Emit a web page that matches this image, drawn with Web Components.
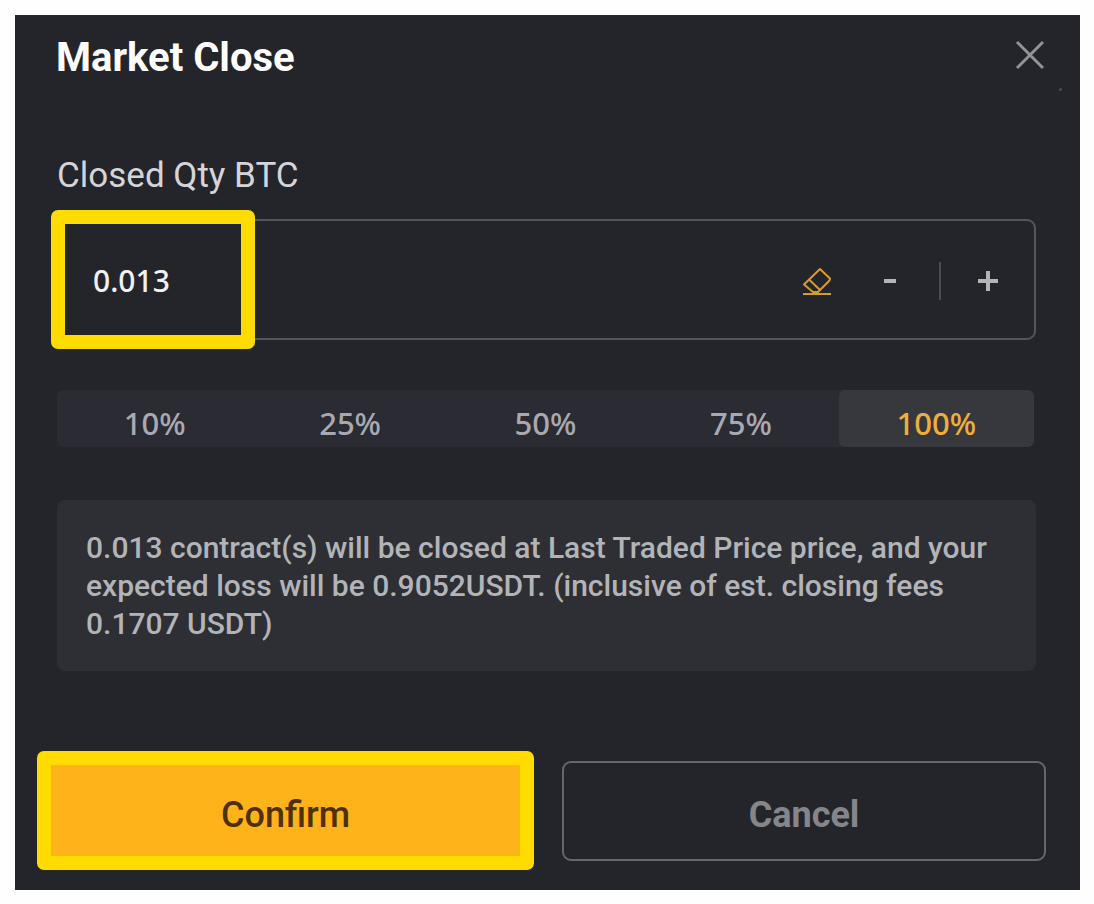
<!DOCTYPE html>
<html lang="en">
<head>
<meta charset="utf-8">
<meta name="viewport" content="width=device-width, initial-scale=1">
<title>Market Close</title>
<style>
  body {
    margin: 15px 14px 14px 15px;
    background: #fefefe;
    font-family: "Noto Sans", "Open Sans", sans-serif;
  }
</style>
</head>
<body>
<modal-dialog heading="Market Close">
  <quantity-field label="Closed Qty BTC" value="0.013" step="0.001"></quantity-field>
  <percent-picker values="10,25,50,75,100" selected="100"></percent-picker>
  <info-note>0.013 contract(s) will be closed at Last Traded Price price, and your expected loss will be 0.9052USDT. (inclusive of est. closing fees 0.1707 USDT)</info-note>
  <action-button slot="actions" variant="primary">Confirm</action-button>
  <action-button slot="actions">Cancel</action-button>
</modal-dialog>

<script>
class ModalDialog extends HTMLElement {
  constructor() {
    super();
    this.attachShadow({ mode: 'open' });
  }

  connectedCallback() {
    this.shadowRoot.innerHTML = `
      <style>
        :host {
          display: block;
          background: #24252a;
          color: #fff;
        }
        header {
          position: relative;
          display: flex;
          align-items: flex-start;
          justify-content: space-between;
          padding: 16px 34px 0 41px;
        }
        /* small speck under the close button */
        header::after {
          content: "";
          position: absolute;
          right: 18px;
          bottom: -6px;
          width: 3px;
          height: 3px;
          border-radius: 50%;
          background: #4c4d51;
        }
        h1 {
          margin: 0;
          font-family: Roboto, sans-serif;
          font-size: 40px;
          line-height: 54px;
          font-weight: 700;
        }
        .close {
          display: flex;
          margin-top: 8px;
          padding: 0;
          border: 0;
          background: none;
          color: #929397;
        }
        .content {
          padding: 67px 44px 0 42px;
        }
        footer {
          display: grid;
          grid-template-columns: 497fr 484fr;
          gap: 28px;
          align-items: center;
          padding: 80px 34px 20px 22px;
        }
      </style>
      <header>
        <h1>${this.getAttribute('heading')}</h1>
        <button class="close" type="button" aria-label="Close">
          <svg width="32" height="32" viewBox="0 0 32 32" fill="none" stroke="currentColor" stroke-width="3">
            <path d="M3 3L29 29M29 3L3 29"/>
          </svg>
        </button>
      </header>
      <div class="content"><slot></slot></div>
      <footer><slot name="actions"></slot></footer>
    `;
  }
}

class QuantityField extends HTMLElement {
  constructor() {
    super();
    this.attachShadow({ mode: 'open' });
  }

  connectedCallback() {
    this.shadowRoot.innerHTML = `
      <style>
        :host {
          display: block;
        }
        label {
          display: block;
          margin-bottom: 19px;
          font-family: Roboto, sans-serif;
          font-size: 35px;
          line-height: 48px;
          color: #d5d5d9;
        }
        .box {
          position: relative;
          display: flex;
          align-items: center;
          box-sizing: border-box;
          padding: 2px 34px 0;
          border: 2px solid #55565a;
          border-radius: 9px;
        }
        /* frame that marks the typed amount */
        .box::before {
          content: "";
          position: absolute;
          top: -11px;
          bottom: -11px;
          left: -8px;
          box-sizing: border-box;
          width: 204px;
          border: 14px solid #ffdb00;
          border-radius: 7px;
          pointer-events: none;
        }
        input {
          flex: 1;
          min-width: 0;
          height: 115px;
          padding: 0;
          border: 0;
          outline: 0;
          background: none;
          color: #f1f1f4;
          font-family: inherit;
          font-size: 30px;
          font-weight: 500;
        }
        button {
          display: flex;
          padding: 0;
          border: 0;
          background: none;
          color: #b3b4b8;
        }
        .clear {
          margin-right: 51px;
          color: #d99a2c;
        }
        .divider {
          width: 2px;
          height: 38px;
          margin: 0 35px 0 42px;
          background: #4b4c50;
        }
      </style>
      <label for="qty">${this.getAttribute('label')}</label>
      <div class="box">
        <input id="qty" type="text" inputmode="decimal" value="${this.getAttribute('value')}">
        <button class="clear" type="button" aria-label="Clear">
          <svg width="30" height="30" viewBox="0 0 30 30" fill="none" stroke="currentColor" stroke-width="2" stroke-linejoin="round">
            <path d="M18 3L28 12.500Q28 14 27 15L16 26H11L2 18.500Z"/>
            <path d="M7 13.500L18 24"/>
            <path d="M1 28H29"/>
          </svg>
        </button>
        <button class="less" type="button" aria-label="Decrease">
          <svg width="14" height="22" viewBox="0 0 14 22" fill="none" stroke="currentColor" stroke-width="4">
            <path d="M1 11H13"/>
          </svg>
        </button>
        <span class="divider"></span>
        <button class="more" type="button" aria-label="Increase">
          <svg width="24" height="22" viewBox="0 0 24 22" fill="none" stroke="currentColor" stroke-width="4">
            <path d="M2 11H22M12 1V21"/>
          </svg>
        </button>
      </div>
    `;

    const input = this.shadowRoot.querySelector('input');
    const step = Number(this.getAttribute('step'));
    const change = (amount) => {
      input.value = Math.max(0, Number(input.value) + amount).toFixed(3);
    };
    this.shadowRoot.querySelector('.clear').addEventListener('click', () => { input.value = ''; });
    this.shadowRoot.querySelector('.less').addEventListener('click', () => change(-step));
    this.shadowRoot.querySelector('.more').addEventListener('click', () => change(step));
  }
}

class PercentPicker extends HTMLElement {
  constructor() {
    super();
    this.attachShadow({ mode: 'open' });
  }

  connectedCallback() {
    const selected = this.getAttribute('selected');
    const buttons = this.getAttribute('values').split(',').map((value) => `
      <button type="button" aria-pressed="${value === selected}">${value}%</button>
    `).join('');

    this.shadowRoot.innerHTML = `
      <style>
        :host {
          display: flex;
          margin: 50px 2px 0 0;
          border-radius: 6px;
          background: #2a2b33;
          overflow: hidden;
        }
        button {
          flex: 1;
          height: 57px;
          padding: 10px 0 0;
          border: 0;
          background: none;
          color: #a9aab1;
          font-family: inherit;
          font-size: 31px;
          line-height: 47px;
          font-weight: 500;
        }
        button[aria-pressed="true"] {
          border-radius: 6px;
          background: #37383d;
          color: #eeb03a;
        }
      </style>
      ${buttons}
    `;

    this.shadowRoot.addEventListener('click', (event) => {
      const button = event.target.closest('button');
      if (!button) return;
      this.shadowRoot.querySelectorAll('button').forEach((item) => {
        item.setAttribute('aria-pressed', item === button);
      });
    });
  }
}

class InfoNote extends HTMLElement {
  constructor() {
    super();
    this.attachShadow({ mode: 'open' });
    this.shadowRoot.innerHTML = `
      <style>
        :host {
          display: block;
          margin-top: 53px;
          padding: 29px 29px 28px;
          border-radius: 8px;
          background: #2e2f34;
          color: #b3b4b8;
          font-family: Roboto, sans-serif;
          font-size: 30px;
          line-height: 38px;
          font-weight: 500;
        }
        p {
          margin: 0;
        }
      </style>
      <p><slot></slot></p>
    `;
  }
}

class ActionButton extends HTMLElement {
  constructor() {
    super();
    this.attachShadow({ mode: 'open' });
    this.shadowRoot.innerHTML = `
      <style>
        :host {
          display: block;
        }
        button {
          display: block;
          box-sizing: border-box;
          width: 100%;
          height: 100px;
          padding: 8px 0 0;
          border: 2px solid #66676b;
          border-radius: 9px;
          background: none;
          color: #85868a;
          font-family: Roboto, sans-serif;
          font-size: 36px;
          font-weight: 700;
        }
        :host([variant="primary"]) button {
          height: 119px;
          border: 14px solid #ffdb00;
          border-radius: 7px;
          background: #ffb31a;
          color: #4f3008;
          font-weight: 500;
        }
      </style>
      <button type="button"><slot></slot></button>
    `;
  }
}

// Register the elements
customElements.define('modal-dialog', ModalDialog);
customElements.define('quantity-field', QuantityField);
customElements.define('percent-picker', PercentPicker);
customElements.define('info-note', InfoNote);
customElements.define('action-button', ActionButton);
</script>
</body>
</html>
